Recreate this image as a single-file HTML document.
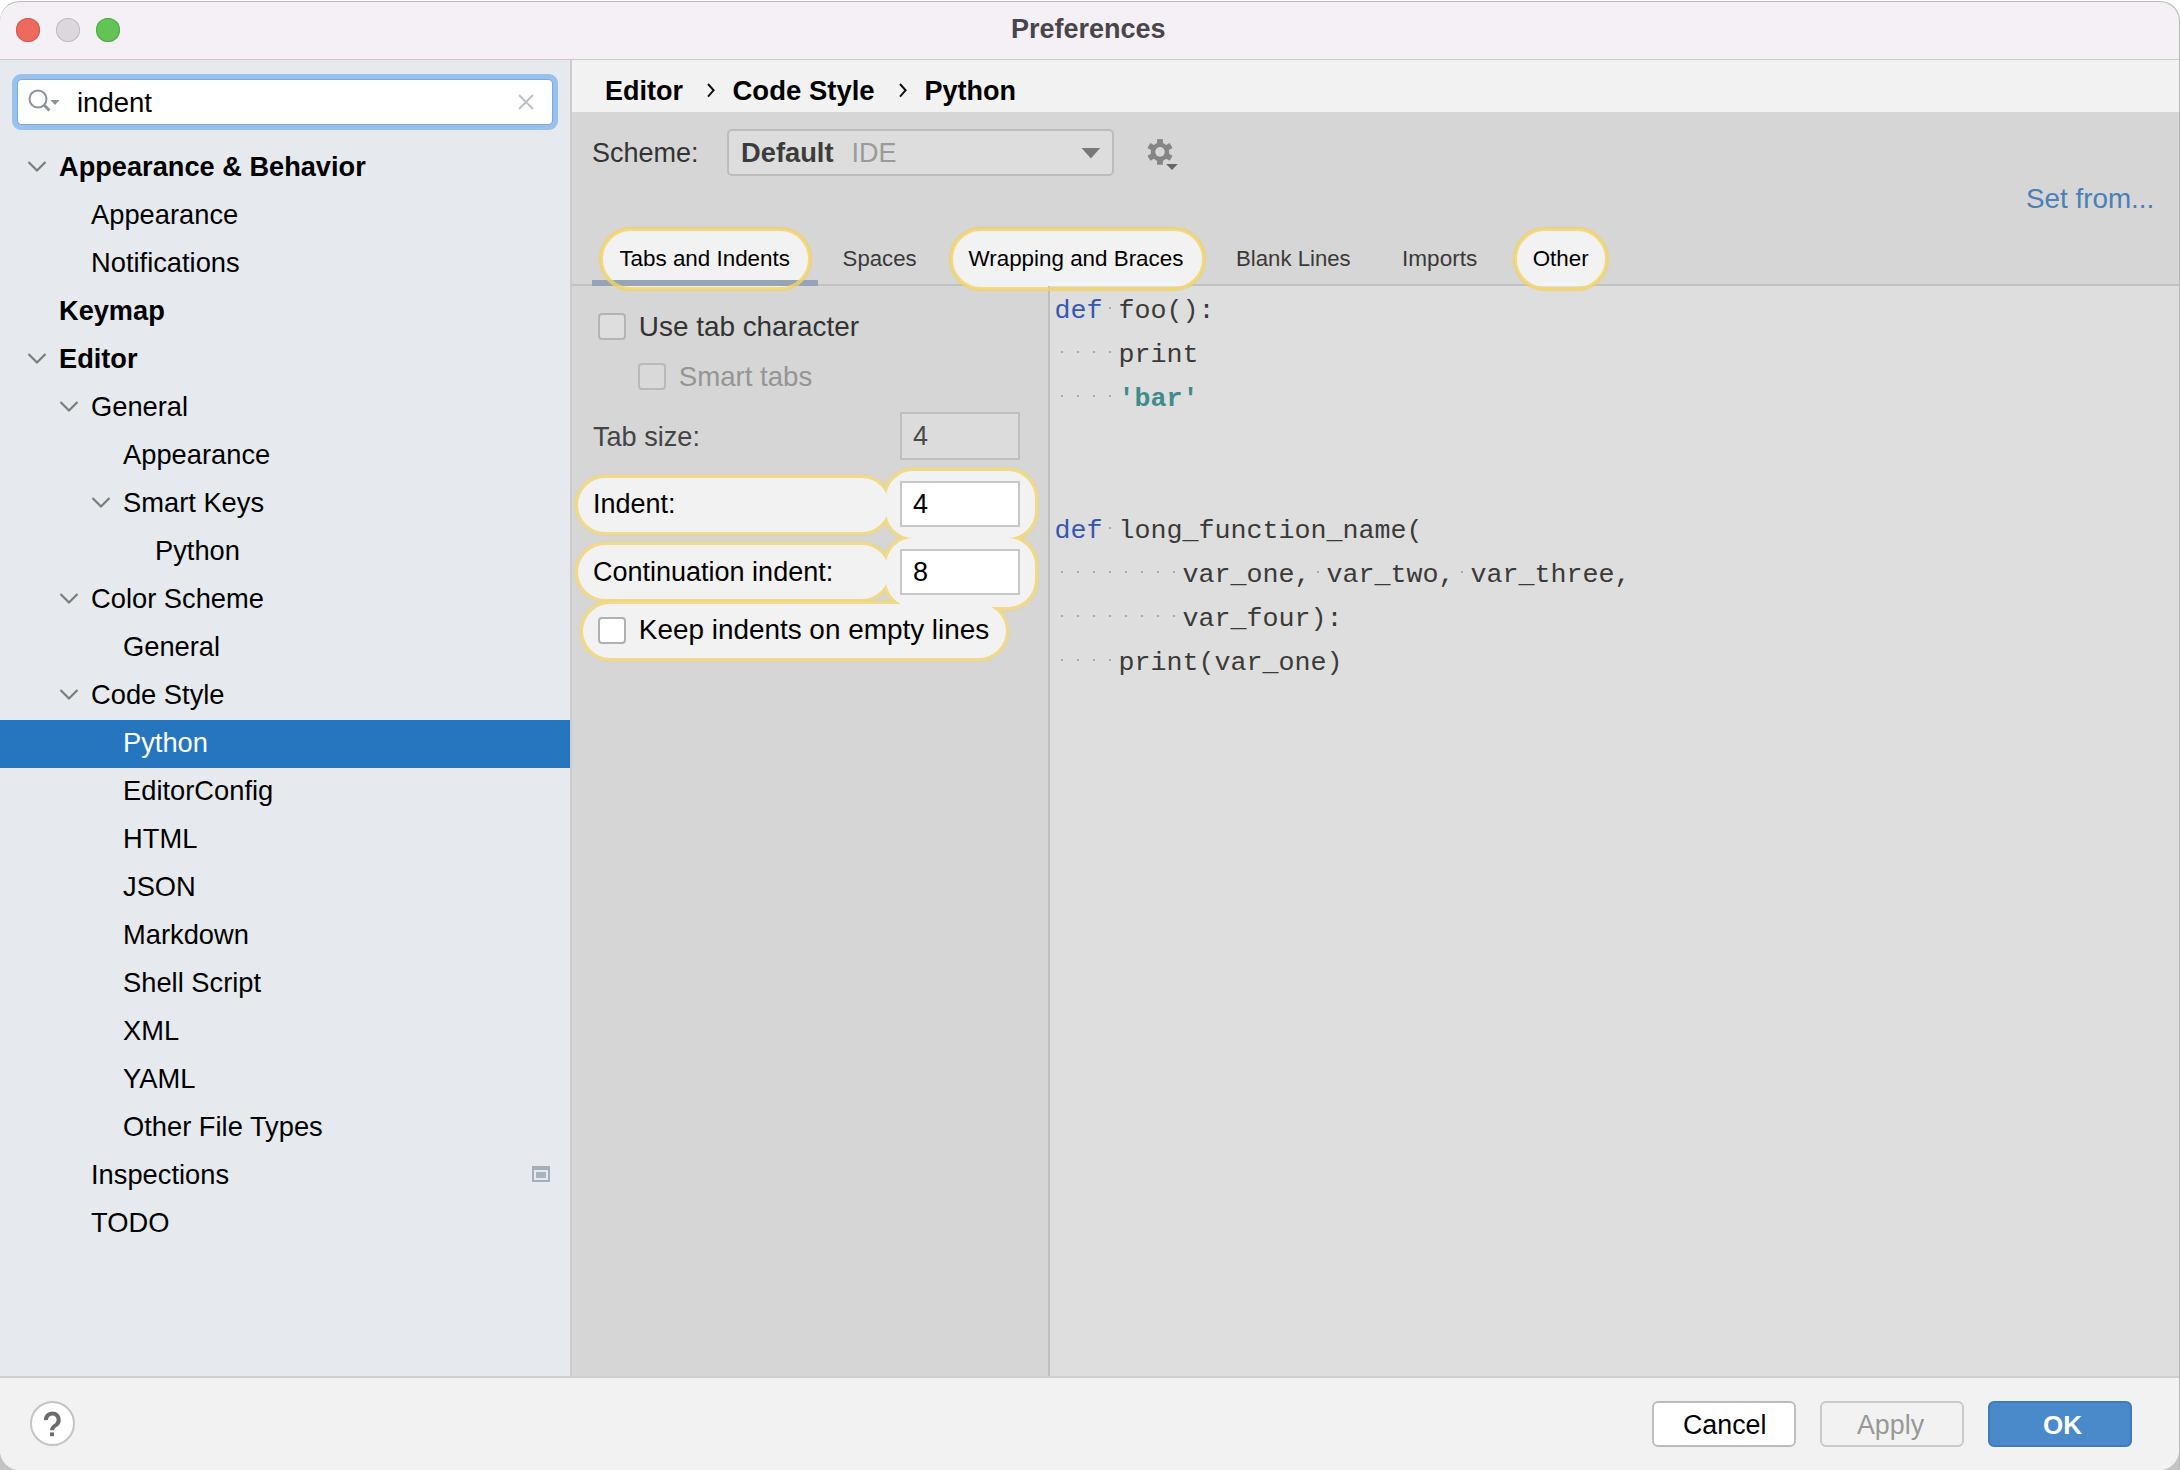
<!DOCTYPE html>
<html><head><meta charset="utf-8"><style>
html,body{margin:0;padding:0;width:2180px;height:1470px;overflow:hidden;background:#fff;}
.b{position:absolute;}
.t{position:absolute;white-space:pre;font-family:'Liberation Sans', sans-serif;}
</style></head><body>
<div class="b" style="left:0px;top:0px;width:2180px;height:1470px;background:#ffffff;"></div>
<div class="b" style="left:0px;top:1440px;width:2180px;height:30px;background:#c4c4c4;"></div>
<div class="b" style="left:0px;top:1px;width:2179px;height:1469px;background:#f2f2f2;border-radius:20px 20px 20px 20px;"></div>
<div class="b" style="left:0px;top:1px;width:2179px;height:58px;background:#f4f0f5;border-radius:20px 20px 0 0;"></div>
<div class="b" style="left:0px;top:58.5px;width:2179px;height:1.5px;background:#c9c9cb;"></div>
<div class="b" style="left:16px;top:18px;width:24px;height:24px;background:#ee6a5e;border-radius:50%;box-shadow:inset 0 0 0 1px #d5544a;"></div>
<div class="b" style="left:56px;top:18px;width:24px;height:24px;background:#dcd7dc;border-radius:50%;box-shadow:inset 0 0 0 1px #c0bbc0;"></div>
<div class="b" style="left:96px;top:18px;width:24px;height:24px;background:#61c454;border-radius:50%;box-shadow:inset 0 0 0 1px #4fa844;"></div>
<div class="t" style="left:1011px;top:12.14px;font-size:27px;line-height:35px;color:#48464b;font-weight:bold;font-family:'Liberation Sans', sans-serif;">Preferences</div>
<div class="b" style="left:0px;top:60px;width:570px;height:1316px;background:#e6eaee;"></div>
<div class="b" style="left:570px;top:60px;width:2px;height:1316px;background:#cbcbcb;"></div>
<div class="b" style="left:12px;top:74px;width:546px;height:56px;background:#97c2ee;border-radius:9px;"></div>
<div class="b" style="left:17px;top:79px;width:536px;height:46px;background:#7ea9d9;border-radius:5px;"></div>
<div class="b" style="left:18px;top:80px;width:534px;height:44px;background:#ffffff;border-radius:4px;"></div>
<svg class="b" style="left:26px;top:86px" width="40" height="32" viewBox="0 0 40 32">
<circle cx="12" cy="13" r="8.5" fill="none" stroke="#8a949b" stroke-width="2"/>
<line x1="18" y1="19" x2="23.5" y2="24.5" stroke="#8a949b" stroke-width="3"/>
<path d="M24.5 14 L33.5 14 L29 19 Z" fill="#8a949b"/>
</svg>
<div class="t" style="left:77px;top:85.47px;font-size:27.5px;line-height:36px;color:#000;font-weight:normal;font-family:'Liberation Sans', sans-serif;">indent</div>
<svg class="b" style="left:514px;top:90px" width="24" height="24" viewBox="0 0 24 24">
<path d="M5 5 L19 19 M19 5 L5 19" stroke="#bbc2c5" stroke-width="2" fill="none"/>
</svg>
<svg class="b" style="left:27px;top:160px" width="20" height="14" viewBox="0 0 20 14"><path d="M1.5 2 L10 10.5 L18.5 2" fill="none" stroke="#7b7b7b" stroke-width="2.2"/></svg>
<div class="t" style="left:59px;top:149.38px;font-size:27.2px;line-height:35px;color:#000;font-weight:bold;font-family:'Liberation Sans', sans-serif;">Appearance & Behavior</div>
<div class="t" style="left:91px;top:197.34px;font-size:27.3px;line-height:35px;color:#000;font-weight:normal;font-family:'Liberation Sans', sans-serif;">Appearance</div>
<div class="t" style="left:91px;top:245.34px;font-size:27.3px;line-height:35px;color:#000;font-weight:normal;font-family:'Liberation Sans', sans-serif;">Notifications</div>
<div class="t" style="left:59px;top:293.38px;font-size:27.2px;line-height:35px;color:#000;font-weight:bold;font-family:'Liberation Sans', sans-serif;">Keymap</div>
<svg class="b" style="left:27px;top:352px" width="20" height="14" viewBox="0 0 20 14"><path d="M1.5 2 L10 10.5 L18.5 2" fill="none" stroke="#7b7b7b" stroke-width="2.2"/></svg>
<div class="t" style="left:59px;top:341.38px;font-size:27.2px;line-height:35px;color:#000;font-weight:bold;font-family:'Liberation Sans', sans-serif;">Editor</div>
<svg class="b" style="left:59px;top:400px" width="20" height="14" viewBox="0 0 20 14"><path d="M1.5 2 L10 10.5 L18.5 2" fill="none" stroke="#7b7b7b" stroke-width="2.2"/></svg>
<div class="t" style="left:91px;top:389.34px;font-size:27.3px;line-height:35px;color:#000;font-weight:normal;font-family:'Liberation Sans', sans-serif;">General</div>
<div class="t" style="left:123px;top:437.34px;font-size:27.3px;line-height:35px;color:#000;font-weight:normal;font-family:'Liberation Sans', sans-serif;">Appearance</div>
<svg class="b" style="left:91px;top:496px" width="20" height="14" viewBox="0 0 20 14"><path d="M1.5 2 L10 10.5 L18.5 2" fill="none" stroke="#7b7b7b" stroke-width="2.2"/></svg>
<div class="t" style="left:123px;top:485.34px;font-size:27.3px;line-height:35px;color:#000;font-weight:normal;font-family:'Liberation Sans', sans-serif;">Smart Keys</div>
<div class="t" style="left:155px;top:533.34px;font-size:27.3px;line-height:35px;color:#000;font-weight:normal;font-family:'Liberation Sans', sans-serif;">Python</div>
<svg class="b" style="left:59px;top:592px" width="20" height="14" viewBox="0 0 20 14"><path d="M1.5 2 L10 10.5 L18.5 2" fill="none" stroke="#7b7b7b" stroke-width="2.2"/></svg>
<div class="t" style="left:91px;top:581.34px;font-size:27.3px;line-height:35px;color:#000;font-weight:normal;font-family:'Liberation Sans', sans-serif;">Color Scheme</div>
<div class="t" style="left:123px;top:629.34px;font-size:27.3px;line-height:35px;color:#000;font-weight:normal;font-family:'Liberation Sans', sans-serif;">General</div>
<svg class="b" style="left:59px;top:688px" width="20" height="14" viewBox="0 0 20 14"><path d="M1.5 2 L10 10.5 L18.5 2" fill="none" stroke="#7b7b7b" stroke-width="2.2"/></svg>
<div class="t" style="left:91px;top:677.34px;font-size:27.3px;line-height:35px;color:#000;font-weight:normal;font-family:'Liberation Sans', sans-serif;">Code Style</div>
<div class="b" style="left:0px;top:720px;width:570px;height:48px;background:#2675bf;"></div>
<div class="t" style="left:123px;top:725.34px;font-size:27.3px;line-height:35px;color:#fff;font-weight:normal;font-family:'Liberation Sans', sans-serif;">Python</div>
<div class="t" style="left:123px;top:773.34px;font-size:27.3px;line-height:35px;color:#000;font-weight:normal;font-family:'Liberation Sans', sans-serif;">EditorConfig</div>
<div class="t" style="left:123px;top:821.34px;font-size:27.3px;line-height:35px;color:#000;font-weight:normal;font-family:'Liberation Sans', sans-serif;">HTML</div>
<div class="t" style="left:123px;top:869.34px;font-size:27.3px;line-height:35px;color:#000;font-weight:normal;font-family:'Liberation Sans', sans-serif;">JSON</div>
<div class="t" style="left:123px;top:917.34px;font-size:27.3px;line-height:35px;color:#000;font-weight:normal;font-family:'Liberation Sans', sans-serif;">Markdown</div>
<div class="t" style="left:123px;top:965.34px;font-size:27.3px;line-height:35px;color:#000;font-weight:normal;font-family:'Liberation Sans', sans-serif;">Shell Script</div>
<div class="t" style="left:123px;top:1013.34px;font-size:27.3px;line-height:35px;color:#000;font-weight:normal;font-family:'Liberation Sans', sans-serif;">XML</div>
<div class="t" style="left:123px;top:1061.34px;font-size:27.3px;line-height:35px;color:#000;font-weight:normal;font-family:'Liberation Sans', sans-serif;">YAML</div>
<div class="t" style="left:123px;top:1109.34px;font-size:27.3px;line-height:35px;color:#000;font-weight:normal;font-family:'Liberation Sans', sans-serif;">Other File Types</div>
<div class="t" style="left:91px;top:1157.34px;font-size:27.3px;line-height:35px;color:#000;font-weight:normal;font-family:'Liberation Sans', sans-serif;">Inspections</div>
<div class="t" style="left:91px;top:1205.34px;font-size:27.3px;line-height:35px;color:#000;font-weight:normal;font-family:'Liberation Sans', sans-serif;">TODO</div>
<div class="b" style="left:532px;top:1166px;width:18px;height:16px;border:2px solid #a4afb8;border-top-width:4px;box-sizing:border-box;"></div>
<div class="b" style="left:536px;top:1172px;width:10px;height:6px;background:#a9b4bd;"></div>
<div class="b" style="left:572px;top:60px;width:1607px;height:52px;background:#f2f2f2;"></div>
<div class="t" style="left:605px;top:73.54px;font-size:27px;line-height:35px;color:#000;font-weight:bold;font-family:'Liberation Sans', sans-serif;">Editor</div>
<svg class="b" style="left:704px;top:80px" width="14" height="20" viewBox="0 0 14 20"><path d="M4 4 L9.6 10.3 L4 16.7" fill="none" stroke="#111" stroke-width="2"/></svg>
<div class="t" style="left:732.5px;top:72.87px;font-size:27.5px;line-height:36px;color:#000;font-weight:bold;font-family:'Liberation Sans', sans-serif;">Code Style</div>
<svg class="b" style="left:896px;top:80px" width="14" height="20" viewBox="0 0 14 20"><path d="M4 4 L9.6 10.3 L4 16.7" fill="none" stroke="#111" stroke-width="2"/></svg>
<div class="t" style="left:924.5px;top:73.54px;font-size:27px;line-height:35px;color:#000;font-weight:bold;font-family:'Liberation Sans', sans-serif;">Python</div>
<div class="b" style="left:572px;top:112px;width:1607px;height:1264px;background:#d6d6d6;"></div>
<div class="t" style="left:592px;top:135.54px;font-size:27px;line-height:35px;color:#333;font-weight:normal;font-family:'Liberation Sans', sans-serif;">Scheme:</div>
<div class="b" style="left:726.5px;top:128.5px;width:387.0px;height:47.0px;background:#dddddd;border:2px solid #bcbcbc;border-radius:5px;box-sizing:border-box;"></div>
<div class="t" style="left:741px;top:135.44px;font-size:27.3px;line-height:35px;color:#3c3c3c;font-weight:bold;font-family:'Liberation Sans', sans-serif;">Default</div>
<div class="t" style="left:851.6px;top:135.54px;font-size:27px;line-height:35px;color:#9a9a9a;font-weight:normal;font-family:'Liberation Sans', sans-serif;">IDE</div>
<svg class="b" style="left:1080px;top:146px" width="22" height="16" viewBox="0 0 22 16"><path d="M1.6 2 L20.2 2 L10.9 12.4 Z" fill="#787878"/></svg>
<svg class="b" style="left:1140px;top:132px" width="44" height="44" viewBox="0 0 44 44">
<g transform="translate(20,19.9)" fill="#858585">
<circle r="9.3"/>
<rect x="-2.9" y="-12.8" width="5.8" height="25.6"/>
<rect x="-2.9" y="-12.8" width="5.8" height="25.6" transform="rotate(60)"/>
<rect x="-2.9" y="-12.8" width="5.8" height="25.6" transform="rotate(120)"/>
<circle r="4.8" fill="#d6d6d6"/>
</g>
<path d="M26.1 32 L37.8 32 L32 38 Z" fill="#666"/>
</svg>
<div class="t" style="left:2026px;top:180.57px;font-size:27.8px;line-height:36px;color:#4a7fb8;font-weight:normal;font-family:'Liberation Sans', sans-serif;">Set from...</div>
<div class="b" style="left:571px;top:284px;width:1608px;height:2px;background:#c2c2c2;"></div>
<div class="b" style="left:600.5px;top:228.5px;width:209.5px;height:60.0px;background:#f2f2f2;border-radius:32.0px;"></div>
<div class="b" style="left:951px;top:228.5px;width:252.5px;height:60.0px;background:#f2f2f2;border-radius:32.0px;"></div>
<div class="b" style="left:1515px;top:228.5px;width:92px;height:60.0px;background:#f2f2f2;border-radius:32.0px;"></div>
<div class="b" style="left:592px;top:280px;width:226px;height:6px;background:#97a3b6;"></div>
<div class="b" style="left:1048px;top:286px;width:1131px;height:1090px;background:#dedede;"></div>
<div class="b" style="left:1048px;top:286px;width:2px;height:1090px;background:#bfbfbf;"></div>
<div class="b" style="left:575px;top:474.5px;width:317px;height:60.0px;background:#f0d988;border-radius:30px;box-shadow:0 0 1.5px 0.5px rgba(240,214,122,0.5);"></div>
<div class="b" style="left:883px;top:467.5px;width:155px;height:73.5px;background:#f0d988;border-radius:30px;box-shadow:0 0 1.5px 0.5px rgba(240,214,122,0.5);"></div>
<div class="b" style="left:575px;top:542px;width:317px;height:60px;background:#f0d988;border-radius:30px;box-shadow:0 0 1.5px 0.5px rgba(240,214,122,0.5);"></div>
<div class="b" style="left:883px;top:535px;width:155px;height:75px;background:#f0d988;border-radius:30px;box-shadow:0 0 1.5px 0.5px rgba(240,214,122,0.5);"></div>
<div class="b" style="left:580px;top:601px;width:429px;height:60px;background:#f0d988;border-radius:30px;box-shadow:0 0 1.5px 0.5px rgba(240,214,122,0.5);"></div>
<div class="b" style="left:598.5px;top:226.5px;width:213.5px;height:64.0px;border:4px solid rgba(242,212,100,0.78);border-radius:32.0px;box-sizing:border-box;box-shadow:0 0 1px rgba(242,212,100,0.5);"></div>
<div class="b" style="left:949px;top:226.5px;width:256.5px;height:64.0px;border:4px solid rgba(242,212,100,0.78);border-radius:32.0px;box-sizing:border-box;box-shadow:0 0 1px rgba(242,212,100,0.5);"></div>
<div class="b" style="left:1513px;top:226.5px;width:96px;height:64.0px;border:4px solid rgba(242,212,100,0.78);border-radius:32.0px;box-sizing:border-box;box-shadow:0 0 1px rgba(242,212,100,0.5);"></div>
<div class="b" style="left:578px;top:477.5px;width:311px;height:54.0px;background:#f2f2f2;border-radius:27px;"></div>
<div class="b" style="left:886px;top:470.5px;width:149px;height:67.5px;background:#f2f2f2;border-radius:27px;"></div>
<div class="b" style="left:578px;top:545px;width:311px;height:54px;background:#f2f2f2;border-radius:27px;"></div>
<div class="b" style="left:886px;top:538px;width:149px;height:69px;background:#f2f2f2;border-radius:27px;"></div>
<div class="b" style="left:583px;top:604px;width:423px;height:54px;background:#f2f2f2;border-radius:27px;"></div>
<div class="t" style="left:619.4px;top:243.74px;font-size:22.4px;line-height:29px;color:#000;font-weight:normal;font-family:'Liberation Sans', sans-serif;">Tabs and Indents</div>
<div class="t" style="left:842.6px;top:243.81px;font-size:22.2px;line-height:29px;color:#3a3a3a;font-weight:normal;font-family:'Liberation Sans', sans-serif;">Spaces</div>
<div class="t" style="left:968.5px;top:243.74px;font-size:22.4px;line-height:29px;color:#000;font-weight:normal;font-family:'Liberation Sans', sans-serif;">Wrapping and Braces</div>
<div class="t" style="left:1236px;top:243.81px;font-size:22.2px;line-height:29px;color:#3a3a3a;font-weight:normal;font-family:'Liberation Sans', sans-serif;">Blank Lines</div>
<div class="t" style="left:1402px;top:243.67px;font-size:22.6px;line-height:29px;color:#3a3a3a;font-weight:normal;font-family:'Liberation Sans', sans-serif;">Imports</div>
<div class="t" style="left:1532.7px;top:243.74px;font-size:22.4px;line-height:29px;color:#000;font-weight:normal;font-family:'Liberation Sans', sans-serif;">Other</div>
<div class="b" style="left:598px;top:313px;width:28px;height:27px;background:#dedede;border:2px solid #b4b4b4;border-radius:4px;box-sizing:border-box;"></div>
<div class="t" style="left:638.8px;top:308.63px;font-size:27.9px;line-height:36px;color:#333;font-weight:normal;font-family:'Liberation Sans', sans-serif;">Use tab character</div>
<div class="b" style="left:638px;top:362.5px;width:28px;height:27.0px;background:#d9d9d9;border:2px solid #b9b9b9;border-radius:4px;box-sizing:border-box;"></div>
<div class="t" style="left:678.8px;top:359.44px;font-size:27.6px;line-height:36px;color:#959595;font-weight:normal;font-family:'Liberation Sans', sans-serif;">Smart tabs</div>
<div class="t" style="left:593px;top:418.61px;font-size:27.1px;line-height:35px;color:#444;font-weight:normal;font-family:'Liberation Sans', sans-serif;">Tab size:</div>
<div class="b" style="left:900px;top:412px;width:120px;height:48px;background:#dcdcdc;border:2px solid #c0c0c0;box-sizing:border-box;"></div>
<div class="t" style="left:913px;top:418.64px;font-size:27px;line-height:35px;color:#4a4a4a;font-weight:normal;font-family:'Liberation Sans', sans-serif;">4</div>
<div class="b" style="left:900px;top:481px;width:120px;height:46px;background:#fff;border:2px solid #c8c8c8;box-sizing:border-box;"></div>
<div class="b" style="left:900px;top:549px;width:120px;height:46px;background:#fff;border:2px solid #c8c8c8;box-sizing:border-box;"></div>
<div class="t" style="left:593px;top:486.54px;font-size:27px;line-height:35px;color:#000;font-weight:normal;font-family:'Liberation Sans', sans-serif;">Indent:</div>
<div class="t" style="left:913px;top:486.54px;font-size:27px;line-height:35px;color:#000;font-weight:normal;font-family:'Liberation Sans', sans-serif;">4</div>
<div class="t" style="left:593px;top:554.54px;font-size:27px;line-height:35px;color:#000;font-weight:normal;font-family:'Liberation Sans', sans-serif;">Continuation indent:</div>
<div class="t" style="left:913px;top:554.54px;font-size:27px;line-height:35px;color:#000;font-weight:normal;font-family:'Liberation Sans', sans-serif;">8</div>
<div class="b" style="left:598px;top:617px;width:28px;height:27px;background:#ffffff;border:2px solid #b0b0b0;border-radius:4px;box-sizing:border-box;"></div>
<div class="t" style="left:638.8px;top:612.33px;font-size:27.9px;line-height:36px;color:#000;font-weight:normal;font-family:'Liberation Sans', sans-serif;">Keep indents on empty lines</div>
<div class="t" style="left:1054.5px;top:293.59px;font-size:26.67px;line-height:35px;color:#3657b0;font-weight:normal;font-family:'Liberation Mono', monospace;">def</div>
<div class="b" style="left:1109.1px;top:307.2px;width:2.0px;height:2.0px;background:#ababab;"></div>
<div class="t" style="left:1118.5px;top:293.59px;font-size:26.67px;line-height:35px;color:#3a3a3a;font-weight:normal;font-family:'Liberation Mono', monospace;">foo():</div>
<div class="b" style="left:1061.1px;top:351.2px;width:2.0px;height:2.0px;background:#ababab;"></div>
<div class="b" style="left:1077.1px;top:351.2px;width:2.0px;height:2.0px;background:#ababab;"></div>
<div class="b" style="left:1093.1px;top:351.2px;width:2.0px;height:2.0px;background:#ababab;"></div>
<div class="b" style="left:1109.1px;top:351.2px;width:2.0px;height:2.0px;background:#ababab;"></div>
<div class="t" style="left:1118.5px;top:337.59px;font-size:26.67px;line-height:35px;color:#3a3a3a;font-weight:normal;font-family:'Liberation Mono', monospace;">print</div>
<div class="b" style="left:1061.1px;top:395.2px;width:2.0px;height:2.0px;background:#ababab;"></div>
<div class="b" style="left:1077.1px;top:395.2px;width:2.0px;height:2.0px;background:#ababab;"></div>
<div class="b" style="left:1093.1px;top:395.2px;width:2.0px;height:2.0px;background:#ababab;"></div>
<div class="b" style="left:1109.1px;top:395.2px;width:2.0px;height:2.0px;background:#ababab;"></div>
<div class="t" style="left:1118.5px;top:381.59px;font-size:26.67px;line-height:35px;color:#3f8c8c;font-weight:normal;font-family:'Liberation Mono', monospace;font-weight:bold">'bar'</div>
<div class="t" style="left:1054.5px;top:513.59px;font-size:26.67px;line-height:35px;color:#3657b0;font-weight:normal;font-family:'Liberation Mono', monospace;">def</div>
<div class="b" style="left:1109.1px;top:527.2px;width:2.0px;height:2.0px;background:#ababab;"></div>
<div class="t" style="left:1118.5px;top:513.59px;font-size:26.67px;line-height:35px;color:#3a3a3a;font-weight:normal;font-family:'Liberation Mono', monospace;">long_function_name(</div>
<div class="b" style="left:1061.1px;top:571.2px;width:2.0px;height:2.0px;background:#ababab;"></div>
<div class="b" style="left:1077.1px;top:571.2px;width:2.0px;height:2.0px;background:#ababab;"></div>
<div class="b" style="left:1093.1px;top:571.2px;width:2.0px;height:2.0px;background:#ababab;"></div>
<div class="b" style="left:1109.1px;top:571.2px;width:2.0px;height:2.0px;background:#ababab;"></div>
<div class="b" style="left:1125.1px;top:571.2px;width:2.0px;height:2.0px;background:#ababab;"></div>
<div class="b" style="left:1141.1px;top:571.2px;width:2.0px;height:2.0px;background:#ababab;"></div>
<div class="b" style="left:1157.1px;top:571.2px;width:2.0px;height:2.0px;background:#ababab;"></div>
<div class="b" style="left:1173.1px;top:571.2px;width:2.0px;height:2.0px;background:#ababab;"></div>
<div class="t" style="left:1182.5px;top:557.59px;font-size:26.67px;line-height:35px;color:#3a3a3a;font-weight:normal;font-family:'Liberation Mono', monospace;">var_one,</div>
<div class="b" style="left:1317.1px;top:571.2px;width:2.0px;height:2.0px;background:#ababab;"></div>
<div class="t" style="left:1326.5px;top:557.59px;font-size:26.67px;line-height:35px;color:#3a3a3a;font-weight:normal;font-family:'Liberation Mono', monospace;">var_two,</div>
<div class="b" style="left:1461.1px;top:571.2px;width:2.0px;height:2.0px;background:#ababab;"></div>
<div class="t" style="left:1470.5px;top:557.59px;font-size:26.67px;line-height:35px;color:#3a3a3a;font-weight:normal;font-family:'Liberation Mono', monospace;">var_three,</div>
<div class="b" style="left:1061.1px;top:615.2px;width:2.0px;height:2.0px;background:#ababab;"></div>
<div class="b" style="left:1077.1px;top:615.2px;width:2.0px;height:2.0px;background:#ababab;"></div>
<div class="b" style="left:1093.1px;top:615.2px;width:2.0px;height:2.0px;background:#ababab;"></div>
<div class="b" style="left:1109.1px;top:615.2px;width:2.0px;height:2.0px;background:#ababab;"></div>
<div class="b" style="left:1125.1px;top:615.2px;width:2.0px;height:2.0px;background:#ababab;"></div>
<div class="b" style="left:1141.1px;top:615.2px;width:2.0px;height:2.0px;background:#ababab;"></div>
<div class="b" style="left:1157.1px;top:615.2px;width:2.0px;height:2.0px;background:#ababab;"></div>
<div class="b" style="left:1173.1px;top:615.2px;width:2.0px;height:2.0px;background:#ababab;"></div>
<div class="t" style="left:1182.5px;top:601.59px;font-size:26.67px;line-height:35px;color:#3a3a3a;font-weight:normal;font-family:'Liberation Mono', monospace;">var_four):</div>
<div class="b" style="left:1061.1px;top:659.2px;width:2.0px;height:2.0px;background:#ababab;"></div>
<div class="b" style="left:1077.1px;top:659.2px;width:2.0px;height:2.0px;background:#ababab;"></div>
<div class="b" style="left:1093.1px;top:659.2px;width:2.0px;height:2.0px;background:#ababab;"></div>
<div class="b" style="left:1109.1px;top:659.2px;width:2.0px;height:2.0px;background:#ababab;"></div>
<div class="t" style="left:1118.5px;top:645.59px;font-size:26.67px;line-height:35px;color:#3a3a3a;font-weight:normal;font-family:'Liberation Mono', monospace;">print(var_one)</div>
<div class="b" style="left:0px;top:1376px;width:2179px;height:2px;background:#cecece;"></div>
<div class="b" style="left:0px;top:1378px;width:2179px;height:92px;background:#f2f2f2;border-radius:0 0 20px 20px;"></div>
<div class="b" style="left:30px;top:1401px;width:45px;height:45px;background:#fff;border:2px solid #c4c4c4;border-radius:50%;box-sizing:border-box;"></div>
<svg class="b" style="left:29px;top:1401px" width="46" height="46" viewBox="0 0 46 46"><path d="M16.9 19.2 A6.4 6.4 0 1 1 27.6 23.6 Q23 26.5 23 29.2" fill="none" stroke="#6b6b6b" stroke-width="4"/><rect x="21" y="31.4" width="4" height="3.8" fill="#6b6b6b"/></svg>
<div class="b" style="left:1652px;top:1401px;width:144px;height:46px;background:#fff;border:2px solid #bdbdbd;border-radius:6px;box-sizing:border-box;"></div>
<div class="t" style="left:1683px;top:1407.61px;font-size:26.8px;line-height:35px;color:#000;font-weight:normal;font-family:'Liberation Sans', sans-serif;">Cancel</div>
<div class="b" style="left:1820px;top:1401px;width:144px;height:46px;background:#f2f2f2;border:2px solid #c9c9c9;border-radius:6px;box-sizing:border-box;"></div>
<div class="t" style="left:1857px;top:1407.61px;font-size:26.8px;line-height:35px;color:#989898;font-weight:normal;font-family:'Liberation Sans', sans-serif;">Apply</div>
<div class="b" style="left:1988px;top:1401px;width:144px;height:46px;background:#4a8acb;border:2px solid #3e7bbd;border-radius:6px;box-sizing:border-box;"></div>
<div class="t" style="left:2043px;top:1408.39px;font-size:26px;line-height:34px;color:#fff;font-weight:bold;font-family:'Liberation Sans', sans-serif;">OK</div>
<div class="b" style="left:0px;top:0.5px;width:2180px;height:1469.5px;border:1.5px solid #b8b8b8;border-left:none;border-bottom:none;border-radius:20px 20px 0 0;box-sizing:border-box;"></div>
</body></html>
